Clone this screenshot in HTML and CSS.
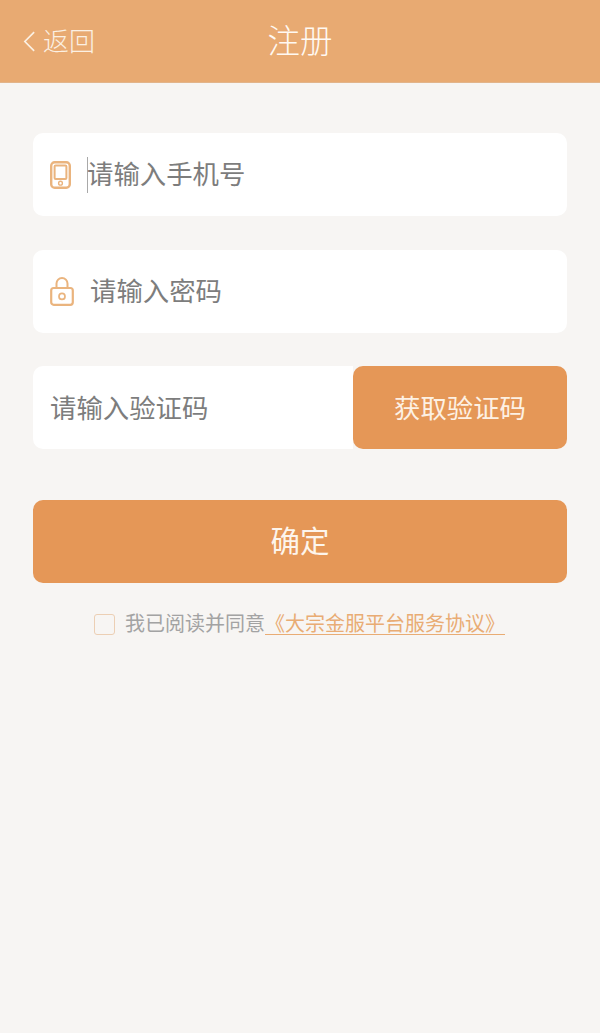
FILE: index.html
```html
<!DOCTYPE html>
<html lang="zh-CN">
<head>
<meta charset="utf-8">
<title>注册</title>
<link rel="stylesheet" href="styles.css">
</head>
<body>
<header class="topbar">
  <a class="back">
    <svg class="back-icon" viewBox="0 0 14 24"><path d="M12 2 2 12l10 10" fill="none" stroke="#fbf0e3" stroke-width="1.8"/></svg>
    <span>返回</span>
  </a>
  <h1 class="title">注册</h1>
</header>
<main class="form">
  <div class="field">
    <svg class="field-icon" viewBox="0 0 21 28"><rect x="1.2" y="1.2" width="18.6" height="25.6" rx="3.5" fill="none" stroke="#eab47e" stroke-width="2.4"/><rect x="4.6" y="4.6" width="11.8" height="13.4" rx="1" fill="none" stroke="#eab47e" stroke-width="2"/><circle cx="10.5" cy="22.2" r="1.9" fill="none" stroke="#eab47e" stroke-width="1.4"/></svg>
    <span class="caret"></span>
    <span class="placeholder">请输入手机号</span>
  </div>
  <div class="field">
    <svg class="field-icon lock" viewBox="0 0 24 30"><path d="M6.5 12V7.5a5.5 5.5 0 0 1 11 0V12" fill="none" stroke="#eab47e" stroke-width="2"/><rect x="1.2" y="12" width="21.6" height="16.8" rx="2.5" fill="none" stroke="#eab47e" stroke-width="2.2"/><circle cx="12" cy="20.4" r="3" fill="none" stroke="#eab47e" stroke-width="1.7"/></svg>
    <span class="placeholder">请输入密码</span>
  </div>
  <div class="code-row">
    <div class="code-input"><span class="placeholder">请输入验证码</span></div>
    <button class="code-btn">获取验证码</button>
  </div>
  <button class="submit">确定</button>
  <div class="agree">
    <span class="checkbox"></span>
    <span class="agree-text">我已阅读并同意<a class="agree-link">《大宗金服平台服务协议》</a></span>
  </div>
</main>
</body>
</html>
```
FILE: styles.css
```css
* { box-sizing: border-box; }
html, body { margin: 0; padding: 0; }
body {
  width: 600px;
  height: 1033px;
  overflow: hidden;
  background: #f7f5f3;
  font-family: "Noto Sans CJK SC", "Noto Sans", sans-serif;
  font-weight: 400;
}
.topbar {
  height: 83px;
  background: #e8aa72;
  border-bottom: 1px solid #e2b48a;
  display: grid;
  grid-template-columns: 1fr auto 1fr;
  align-items: center;
  color: #fbf0e3;
}
.back {
  display: flex;
  align-items: center;
  gap: 7px;
  padding-left: 23px;
  font-size: 26px;
  line-height: 32px;
  font-weight: 300;
}
.back span { margin-top: -2px; }
.back-icon { width: 13px; height: 23px; }
.title {
  margin: -4px 0 0;
  font-size: 32.5px;
  font-weight: 300;
  line-height: 40px;
  color: #fff9f2;
}
.form {
  padding: 50px 33px 0 33px;
  display: flex;
  flex-direction: column;
}
.field {
  height: 83px;
  background: #fff;
  border-radius: 10px;
  margin-bottom: 34px;
  display: flex;
  align-items: center;
  padding-left: 17px;
}
.field + .field { margin-bottom: 33px; }
.field-icon { width: 21px; height: 28px; margin-right: 17px; }
.field-icon.lock { width: 24px; height: 30px; margin-right: 16px; margin-top: -2px; }
.caret { width: 1px; height: 36px; background: #a9a9a9; margin-left: -1px; }
.placeholder {
  font-size: 26.4px;
  line-height: 36px;
  color: #7d7d7d;
  margin-top: -3px;
}
.field .caret + .placeholder { margin-left: -1px; }
.code-row {
  display: flex;
  height: 83px;
  margin-bottom: 51px;
}
.code-input {
  width: 320px;
  background: #fff;
  border-radius: 10px 0 0 10px;
  display: flex;
  align-items: center;
  padding-left: 18px;
}
.code-input .placeholder { margin-left: -1px; margin-top: -2px; }
.code-btn {
  flex: 1;
  border: 0;
  padding: 0 0 2px;
  background: #e59757;
  color: #fdf1e4;
  border-radius: 10px;
  font: inherit;
  font-size: 26.4px;
}
.submit {
  height: 83px;
  border: 0;
  padding: 0 0 5px;
  background: #e59757;
  color: #fdf5ec;
  border-radius: 10px;
  font: inherit;
  font-size: 29.5px;
}
.agree {
  display: flex;
  align-items: center;
  margin-top: 29px;
  padding-left: 61px;
  height: 24px;
}
.checkbox {
  width: 21px;
  height: 21px;
  border: 1px solid #eccfb4;
  border-radius: 3px;
  margin-right: 10px;
}
.agree-text {
  font-size: 20px;
  line-height: 24px;
  color: #a3a3a3;
  white-space: nowrap;
  margin-top: -3px;
}
.agree-link {
  color: #e9ac74;
  text-decoration: underline;
  text-underline-offset: 3px;
  text-decoration-thickness: 1px;
}
```
